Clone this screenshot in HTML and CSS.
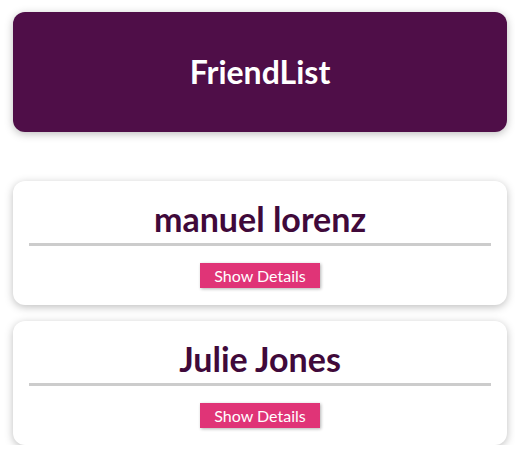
FILE: index.html
```html
<!DOCTYPE html>
<html lang="en">
<head>
<meta charset="utf-8">
<title>FriendList</title>
<link rel="stylesheet" href="styles.css">
</head>
<body>
<main class="app">
  <header class="header">
    <h1 class="header-title">FriendList</h1>
  </header>
  <ul class="friends">
    <li class="card">
      <h2 class="card-name">manuel lorenz</h2>
      <button class="btn" type="button">Show Details</button>
    </li>
    <li class="card">
      <h2 class="card-name">Julie Jones</h2>
      <button class="btn" type="button">Show Details</button>
    </li>
  </ul>
</main>
</body>
</html>
```

FILE: styles.css
```css
html, body {
  margin: 0;
  padding: 0;
  background: #ffffff;
}

body {
  font-family: "Lato", "Noto Sans", sans-serif;
}

.app {
  margin: 12px 8px 0 13px;
}

.header {
  height: 120px;
  background: #4f0e48;
  border-radius: 12px;
  box-shadow: 0 2px 8px rgba(0, 0, 0, 0.26);
  display: flex;
  align-items: center;
  justify-content: center;
}

.header-title {
  margin: 0;
  color: #ffffff;
  font-size: 32px;
  font-weight: 700;
  line-height: 1;
}

.friends {
  list-style: none;
  margin: 49px 0 0;
  padding: 0;
  display: flex;
  flex-direction: column;
  gap: 16px;
}

.card {
  background: #ffffff;
  border-radius: 12px;
  box-shadow: 0 2px 8px rgba(0, 0, 0, 0.26);
  padding: 18px 16px 17px;
  display: flex;
  flex-direction: column;
  align-items: center;
}

.card-name {
  align-self: stretch;
  margin: 0;
  padding-bottom: 4px;
  border-bottom: 3px solid #cccccc;
  text-align: center;
  color: #40093a;
  font-size: 34px;
  font-weight: 700;
  line-height: 40px;
}

.btn {
  margin-top: 17px;
  width: 120px;
  height: 25px;
  padding: 0;
  border: none;
  background: #e03477;
  color: #ffffff;
  font-family: "Lato", "Noto Sans", sans-serif;
  font-size: 16px;
  line-height: 25px;
  box-shadow: 1px 1px 3px rgba(0, 0, 0, 0.3);
  cursor: pointer;
}
```
